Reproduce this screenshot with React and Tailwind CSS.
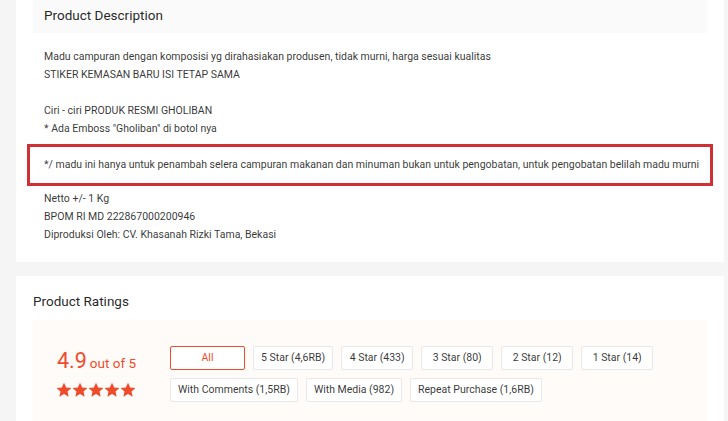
import { Fragment } from "react";

const descTop = [
  "Madu campuran dengan komposisi yg dirahasiakan produsen, tidak murni, harga sesuai kualitas",
  "STIKER KEMASAN BARU ISI TETAP SAMA",
  "",
  "Ciri - ciri PRODUK RESMI GHOLIBAN",
  '* Ada Emboss "Gholiban" di botol nya',
];

const descBottom = [
  "Netto +/- 1 Kg",
  "BPOM RI MD 222867000200946",
  "Diproduksi Oleh: CV. Khasanah Rizki Tama, Bekasi",
];

const filtersTop = ["All", "5 Star (4,6RB)", "4 Star (433)", "3 Star (80)", "2 Star (12)", "1 Star (14)"];
const filtersBottom = ["With Comments (1,5RB)", "With Media (982)", "Repeat Purchase (1,6RB)"];

function Star() {
  return (
    <svg width="16" height="16" viewBox="0 0 24 24" fill="#ee4d2d">
      <path d="M12 1l3.3 7.2 7.9.8-5.9 5.3 1.7 7.7L12 18l-7 4 1.7-7.7L.8 9l7.9-.8z" />
    </svg>
  );
}

function FilterButton({ label, active }) {
  return (
    <button
      className={
        active
          ? "h-[24px] min-w-[75px] px-[7px] border border-[#ee4d2d] bg-white text-[#ee4d2d] text-[10.5px] rounded-[2px]"
          : "h-[24px] min-w-[72px] px-[7px] border border-[rgba(0,0,0,0.09)] bg-white text-[rgba(0,0,0,0.8)] text-[10.5px] rounded-[2px]"
      }
    >
      {label}
    </button>
  );
}

export default function App() {
  return (
    <div
      className="h-[421px] w-[728px] overflow-hidden bg-[#f5f5f5]"
      style={{ fontFamily: "Roboto, 'Liberation Sans', sans-serif" }}
    >
      <section className="ml-[16px] w-[708px] bg-white px-[17px] pb-[18px]">
        <div className="h-[33px] bg-[#fafafa] pl-[11px] pb-[3px] flex items-center text-[13.5px] text-[rgba(0,0,0,0.87)]">
          Product Description
        </div>
        <div className="mt-[15px] px-[11px] text-[10.5px] leading-[18px] text-[rgba(0,0,0,0.8)]">
          {descTop.map((line, i) => (
            <div key={i} className="h-[18px]">
              {line}
            </div>
          ))}
          <div className="-mx-[17px] mt-[6px] mb-[4px] h-[42px] border-[3px] border-[#cf3036] pl-[14px] flex items-center">
            */ madu ini hanya untuk penambah selera campuran makanan dan minuman bukan untuk pengobatan, untuk pengobatan belilah madu murni
          </div>
          {descBottom.map((line, i) => (
            <Fragment key={i}>
              <div className="h-[18px]">{line}</div>
            </Fragment>
          ))}
        </div>
      </section>

      <section className="ml-[16px] mt-[14px] w-[708px] bg-white px-[17px] pt-[15px]">
        <div className="h-[20px] flex items-center text-[13.5px] text-[rgba(0,0,0,0.87)]">
          Product Ratings
        </div>
        <div className="mt-[9px] h-[120px] bg-[#fffbf8] pl-[24px] pt-[26px] flex">
          <div className="w-[113px] shrink-0 text-[#ee4d2d]">
            <div className="flex items-baseline gap-[3px] pt-[4px]">
              <span className="text-[21.5px] leading-none">4.9</span>
              <span className="text-[13.5px] leading-none">out of 5</span>
            </div>
            <div className="mt-[10px] -ml-[1px] flex gap-0">
              <Star />
              <Star />
              <Star />
              <Star />
              <Star />
            </div>
          </div>
          <div className="flex flex-col gap-[8px]">
            <div className="flex gap-[8px]">
              {filtersTop.map((f, i) => (
                <FilterButton key={f} label={f} active={i === 0} />
              ))}
            </div>
            <div className="flex gap-[8px]">
              {filtersBottom.map((f) => (
                <FilterButton key={f} label={f} />
              ))}
            </div>
          </div>
        </div>
      </section>
    </div>
  );
}
